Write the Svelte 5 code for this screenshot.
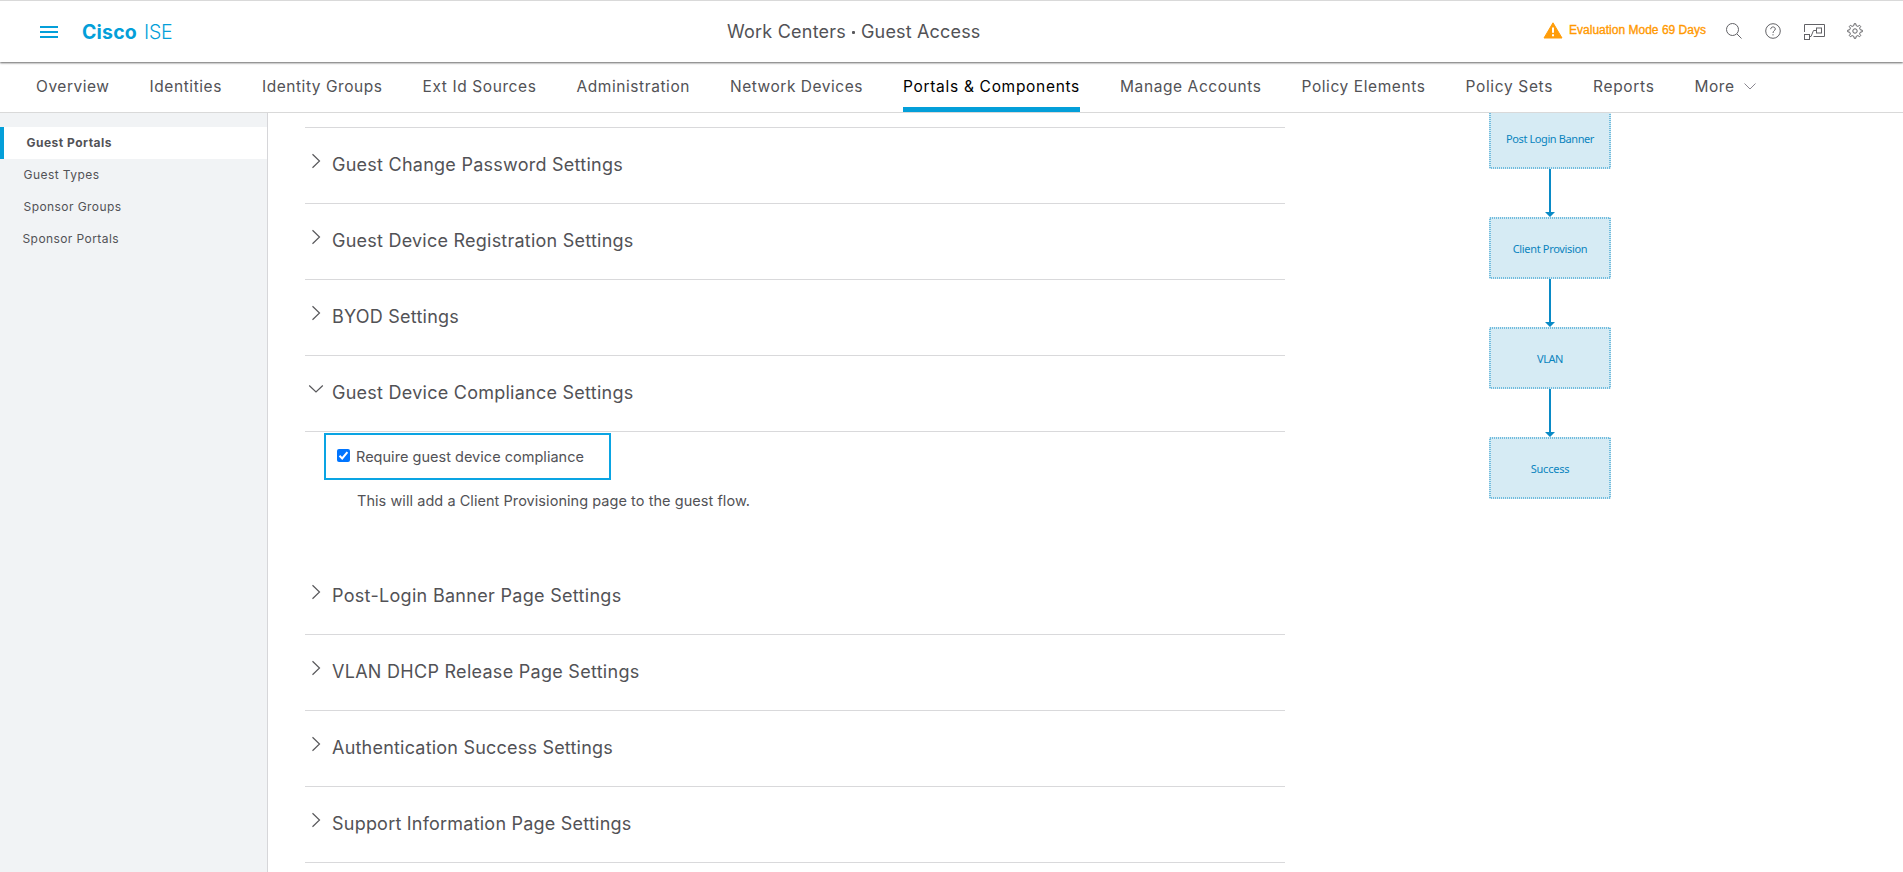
<script>
  const nav = [
    ['Overview', 73.5], ['Identities', 72.5], ['Identity Groups', 120.5], ['Ext Id Sources', 114],
    ['Administration', 113.5], ['Network Devices', 133], ['Portals & Components', 177, true],
    ['Manage Accounts', 141.5], ['Policy Elements', 124], ['Policy Sets', 87.5], ['Reports', 61.5], ['More', 40]
  ];
  const side = [
    ['Guest Portals', 85.5, 22.5], ['Guest Types', 76, 23.5], ['Sponsor Groups', 98, 23.5], ['Sponsor Portals', 96.5, 22.5]
  ];
  const sections = [
    ['Guest Change Password Settings', 291],
    ['Guest Device Registration Settings', 301.5],
    ['BYOD Settings', 127],
    ['Guest Device Compliance Settings', 301.5, true],
    ['Post-Login Banner Page Settings', 289.5],
    ['VLAN DHCP Release Page Settings', 307.5],
    ['Authentication Success Settings', 281],
    ['Support Information Page Settings', 299.5]
  ];
  const steps = [['Post Login Banner', 88], ['Client Provision', 74.5], ['VLAN', 26], ['Success', 38.5]];

  // Tracks the text out (or in) so that it takes the given width.
  function fit(node, width) {
    const natural = node.getBoundingClientRect().width;
    node.style.letterSpacing = (width - natural) / node.textContent.length + 'px';
  }
</script>

<div class="page">
  <header>
    <div class="brand">
      <svg width="18" height="12" viewBox="0 0 18 12"><path d="M0 1h18M0 6h18M0 11h18" stroke="#049fd9" stroke-width="2" /></svg>
      <div class="logo"><b use:fit={55}>Cisco</b><span use:fit={28.5}>ISE</span></div>
    </div>
    <div class="title"><span use:fit={119}>Work Centers</span><i></i><span use:fit={119.5}>Guest Access</span></div>
    <div class="tools">
      <svg class="warn" width="20" height="17" viewBox="0 0 20 17">
        <path d="M10 .8 19 16H1Z" fill="#ff9d0a" stroke="#ff9d0a" stroke-width="1" stroke-linejoin="round" />
        <path d="M10 5.5v5.2M10 12.3v2" stroke="#fff" stroke-width="2" />
      </svg>
      <span class="eval" use:fit={137}>Evaluation Mode 69 Days</span>
      <svg class="search" width="16" height="16" viewBox="0 0 16 16"><circle cx="6.5" cy="6.5" r="6" /><path d="m11 11 4.5 4.5" /></svg>
      <svg class="help" width="16" height="16" viewBox="0 0 16 16"><circle cx="8" cy="8" r="7.3" /><path d="M5.7 6.2c0-3 4.6-3 4.6-.2 0 1.700-2.300 1.700-2.300 4M8 11.200v1.200" /></svg>
      <svg class="link" width="22" height="16" viewBox="0 0 22 16"><path d="M.5 8V.5h20v12H9.500" /><rect x=".5" y="10.500" width="5" height="5" /><rect x="12.500" y="4" width="5" height="5" /><path d="M5.500 12.500h1.500l2.500-6h3" /></svg>
      <svg class="gear" width="16" height="16" viewBox="0 0 16 16"><circle cx="8" cy="8" r="2.200" /><path d="M6.800 2.700 7.200.7h1.600l.4 2 1.700.7 1.700-1.100 1.100 1.100-1.100 1.700.7 1.700 2 .4v1.600l-2 .4-.7 1.700 1.100 1.700-1.100 1.100-1.700-1.100-1.700.7-.4 2H7.200l-.4-2-1.700-.7-1.700 1.100-1.100-1.100 1.100-1.700-.7-1.700-2-.4V7.200l2-.4.7-1.700-1.100-1.700 1.100-1.100 1.700 1.100Z" /></svg>
    </div>
  </header>
  <nav>
    {#each nav as [label, width, active]}
      <a class:active><span use:fit={width}>{label}</span></a>
    {/each}
    <svg width="12" height="7" viewBox="0 0 12 7"><path d="m.5.500 5.500 5.500L11.500.5" fill="none" stroke="#8a8790" /></svg>
  </nav>
  <div class="body">
    <aside>
      {#each side as [label, width, pad], i}
        <div class="entry" class:on={i === 0} style:padding-left="{pad}px"><span use:fit={width}>{label}</span></div>
      {/each}
    </aside>
    <main>
      <div class="settings">
        {#each sections as [label, width, open]}
          <section>
            <svg width="16" height="16" viewBox="0 0 16 16"><path d={open ? 'M1.200 4.500 8 11l6.800-6.500' : 'M4.500 1.200 11.500 8l-7 6.800'} fill="none" stroke="#58585b" stroke-width="1.200" /></svg>
            <h2><span use:fit={width}>{label}</span></h2>
          </section>
          {#if open}
            <div class="detail">
              <label>
                <span class="box"><svg width="13" height="13" viewBox="0 0 13 13"><path d="m2.500 6.800 2.700 2.700 5.200-6.300" fill="none" stroke="#fff" stroke-width="2" /></svg></span>
                <span use:fit={228}>Require guest device compliance</span>
              </label>
              <p><span use:fit={393}>This will add a Client Provisioning page to the guest flow.</span></p>
            </div>
          {/if}
        {/each}
      </div>
      <div class="flow">
        {#each steps as [label, width], i}
          {#if i > 0}
            <svg class="arrow" width="12" height="48" viewBox="0 0 12 48"><path d="M5 0h2v43h4L6 48 1 43h4Z" fill="#0a8ac6" /></svg>
          {/if}
          <div class="step">
            <svg class="edge" width="122" height="62" viewBox="0 0 122 62"><rect x="1" y="1" width="120" height="60" /></svg>
            <span use:fit={width}>{label}</span>
          </div>
        {/each}
      </div>
    </main>
  </div>
</div>

<style>
  :global(body) { margin: 0; overflow: hidden; }
  .page { width: 1903px; height: 872px; box-sizing: border-box; border-top: 1px solid #d9d9d9; display: flex; flex-direction: column; overflow: hidden; background: #fff; font-family: Inter, sans-serif; font-weight: 370; color: #525256; }
  span { white-space: nowrap; }
  svg { display: block; flex: none; }
  header { position: relative; z-index: 1; height: 61px; flex: none; display: grid; grid-template-columns: 727px 1fr 360px; background: #fff; box-shadow: 0 1px 2px #666; }
  .brand { display: flex; align-items: center; padding-left: 40px; gap: 24px; color: #049fd9; }
  .brand > svg { margin-top: 1px; }
  .logo { display: flex; gap: 7px; font-size: 19.500px; line-height: 24px; }
  .logo b { font-weight: 700; }
  .logo span { font-weight: 300; }
  .title { display: flex; align-items: center; font-size: 18px; padding-bottom: 1px; }
  .title i { width: 3px; height: 3px; background: #58585b; border-radius: 1px; margin: 2px 6px 0 6px; }
  .tools { display: flex; align-items: center; padding-bottom: 2px; }
  .tools svg:not(.warn) { fill: none; stroke: #626266; stroke-width: 1; }
  .warn { margin-right: 6px; }
  .eval { font: 12px "Liberation Sans", sans-serif; color: #f90; -webkit-text-stroke: .35px #f90; margin-top: -1px; }
  .search { margin-left: 20px; }
  .help { margin-left: 23px; }
  .link { margin-left: 23px; margin-top: 2px; }
  .gear { margin-left: 21px; }
  nav { height: 50px; flex: none; display: flex; gap: 40px; padding-left: 36px; border-bottom: 1px solid #d9d9d9; font-size: 15.500px; }
  nav a { height: 50px; box-sizing: border-box; display: flex; padding-top: 15px; line-height: 20px; }
  nav a.active { color: #000; border-bottom: 5px solid #049fd9; }
  nav svg { margin: 21px 0 0 -31px; }
  .body { flex: 1; min-height: 0; display: flex; }
  aside { width: 267px; flex: none; padding-top: 14px; background: #f1f3f5; border-right: 1px solid #d6d6d9; font-size: 12px; }
  .entry { height: 32px; line-height: 32px; box-sizing: border-box; }
  .entry.on { background: #fff; border-left: 4px solid #049fd9; font-weight: 700; }
  main { flex: 1; display: flex; padding-left: 37px; overflow: hidden; }
  .settings { width: 980px; flex: none; margin-top: 14px; border-top: 1px solid #d9d9db; height: 760px; }
  section { height: 76px; box-sizing: border-box; border-bottom: 1px solid #d9d9db; display: flex; padding: 25px 0 0 3px; }
  h2 { margin: 0 0 0 8px; font-size: 18px; line-height: 24px; font-weight: 370; }
  .detail { height: 127px; font-size: 14.500px; }
  label { display: flex; align-items: center; width: 287px; height: 47px; box-sizing: border-box; margin-left: 19px; border: 2px solid #0aa4e3; padding: 0 0 0 11px; gap: 6px; transform: translateY(1px); }
  .box { width: 13px; height: 13px; background: #0075ff; border-radius: 2px; margin-bottom: 3px; }
  p { margin: 12px 0 0 52px; line-height: 20px; }
  .flow { margin: -6px 0 0 204px; display: flex; flex-direction: column; align-items: center; }
  .step { position: relative; width: 122px; height: 62px; flex: none; background: #d6ebf4; display: flex; align-items: center; justify-content: center; font: 11px "Noto Sans", sans-serif; color: #0a84be; }
  .edge { position: absolute; inset: 0; fill: none; stroke: #4fadd6; stroke-width: 1.500; stroke-dasharray: 1 1; }
</style>
